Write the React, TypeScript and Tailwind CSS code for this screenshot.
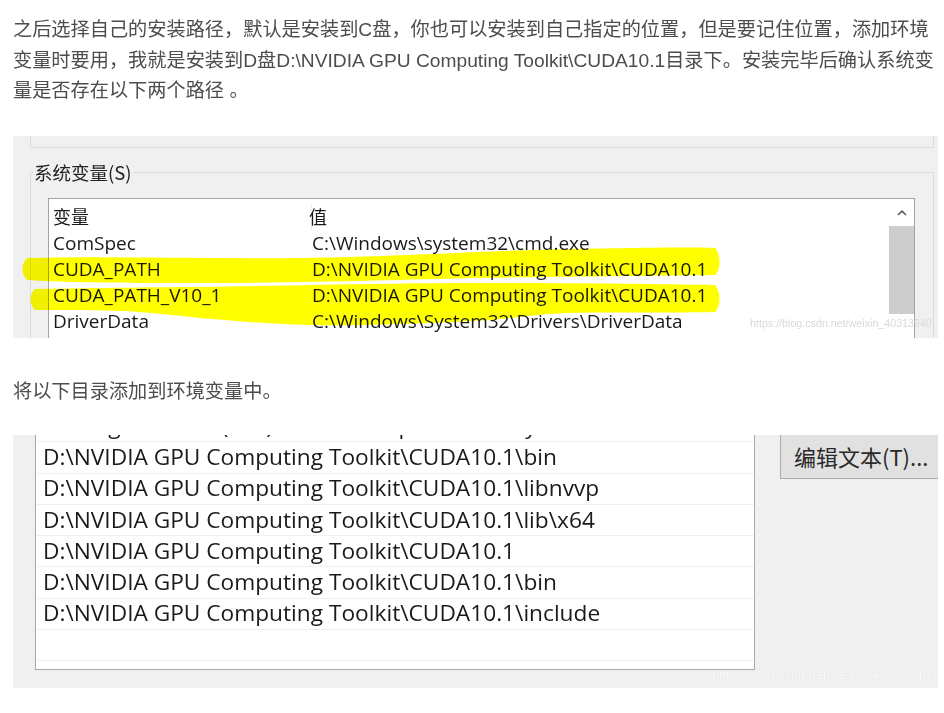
const envRows = [
  { name: "ComSpec", value: "C:\\Windows\\system32\\cmd.exe" },
  { name: "CUDA_PATH", value: "D:\\NVIDIA GPU Computing Toolkit\\CUDA10.1" },
  { name: "CUDA_PATH_V10_1", value: "D:\\NVIDIA GPU Computing Toolkit\\CUDA10.1" },
  { name: "DriverData", value: "C:\\Windows\\System32\\Drivers\\DriverData" },
];

const pathRows = [
  "C:\\Program Files (x86)\\NVIDIA Corporation\\PhysX\\Common",
  "D:\\NVIDIA GPU Computing Toolkit\\CUDA10.1\\bin",
  "D:\\NVIDIA GPU Computing Toolkit\\CUDA10.1\\libnvvp",
  "D:\\NVIDIA GPU Computing Toolkit\\CUDA10.1\\lib\\x64",
  "D:\\NVIDIA GPU Computing Toolkit\\CUDA10.1",
  "D:\\NVIDIA GPU Computing Toolkit\\CUDA10.1\\bin",
  "D:\\NVIDIA GPU Computing Toolkit\\CUDA10.1\\include",
  "",
];

function SystemVarsShot() {
  return (
    <div className="relative mt-[29.5px] h-[202px] w-[925px] overflow-hidden bg-[#f0f0f0]">
      {/* bottom edge of the user variables group */}
      <div className="ml-[17px] mr-[4px] h-[12px] border-x border-b border-[#dcdcdc]" />

      <fieldset className="ml-[17px] mr-[4px] mt-[13px] border border-[#dcdcdc]">
        <legend className="ml-[2px] px-[1px] font-['Noto_Sans_CJK_SC',sans-serif] text-[18.5px] leading-[22px] text-[#222]">
          系统变量(S)
        </legend>
        <div className="pl-[17px] pr-[18px] pt-[15px]">
          <div className="flex h-[200px] border border-[#a3a3a3] bg-white">
            <div className="flex-1 pl-[4px] pt-[5px] font-['Open_Sans','Noto_Sans_CJK_SC',sans-serif] text-[19px] text-[#1a1a1a]">
              <div className="grid h-[26px] grid-cols-[259px_1fr] font-['Noto_Sans_CJK_SC',sans-serif] text-[18px] leading-[24px]">
                <span className="border-r border-[#ececec]">变量</span>
                <span className="-ml-[3px]">值</span>
              </div>
              {envRows.map((r) => (
                <div key={r.name} className="grid h-[26px] grid-cols-[259px_1fr] items-center leading-[26px]">
                  <span>{r.name}</span>
                  <span>{r.value}</span>
                </div>
              ))}
            </div>
            <div className="flex w-[25px] flex-col">
              <div className="flex h-[27px] items-center justify-center">
                <svg width="10" height="6" viewBox="0 0 10 6">
                  <path d="M1 5 L5 1.2 L9 5" fill="none" stroke="#5a5a5a" strokeWidth="1.6" />
                </svg>
              </div>
              <div className="h-[88px] bg-[#cdcdcd]" />
            </div>
          </div>
        </div>
      </fieldset>

      {/* marker strokes */}
      <svg
        className="pointer-events-none absolute left-0 top-0 mix-blend-multiply"
        width="925"
        height="202"
        viewBox="0 0 925 202"
      >
        <path
          fill="#ffff00"
          d="M14 122 C100 120 200 123 287 122 C380 121 460 115 560 113 C620 112 680 111 702 112 C708 118 708 134 702 139 C620 140 520 141 459 142 C380 144 300 147 167 147 C100 147 40 146 14 144 C8 138 8 128 14 122 Z"
        />
        <path
          fill="#ffff00"
          d="M22 153 C90 152 150 151 187 151 C300 149 400 147 459 147 C560 147 640 148 702 149 C708 156 708 170 702 176 C640 177 590 176 557 177 C520 178 490 184 459 185 C400 188 340 190 297 189 C250 188 215 184 187 182 C150 178 120 175 107 175 C80 174 40 174 22 174 C16 168 16 158 22 153 Z"
        />
      </svg>

      <span className="absolute left-[737px] top-[180px] font-['Liberation_Sans',sans-serif] text-[10.7px] leading-[14px] text-[#d9d9d9]">
        https://blog.csdn.net/weixin_40313940
      </span>
    </div>
  );
}

function PathListShot() {
  return (
    <div className="relative mt-[27.75px] flex h-[253px] w-[925px] items-start overflow-hidden bg-[#f0f0f0]">
      <div className="ml-[22px] h-[235px] w-[720px] shrink-0 overflow-hidden border-x border-b border-[#a8a8a8] bg-white">
        <div className="-mt-[24px] font-['Open_Sans',sans-serif] text-[22.7px] text-[#1a1a1a]">
          {pathRows.map((p, i) => (
            <div
              key={i}
              className="flex h-[31.25px] items-center whitespace-nowrap border-b border-[#f0f0f0] pl-[7px]"
            >
              {p}
            </div>
          ))}
        </div>
      </div>
      <div className="ml-[25px] flex h-[44px] w-[200px] shrink-0 items-center border-b border-l border-[#adadad] bg-[#e1e1e1] pl-[13px] font-['Noto_Sans_CJK_SC',sans-serif] text-[22px] text-[#2a2a2a]">
        编辑文本(T)...
      </div>
      <span className="absolute left-[699px] top-[232px] font-['Liberation_Sans',sans-serif] text-[12.8px] leading-[16px] text-[#fafafa] [text-shadow:0_0_1px_#d4d4d4]">
        https://blog.csdn.net/weixin_40313940
      </span>
    </div>
  );
}

export default function App() {
  return (
    <div className="min-h-screen bg-white pl-[13px] pr-[2px] pt-[15px] pb-[25px] font-['Liberation_Sans','Noto_Sans_CJK_SC',sans-serif] text-[19.2px] leading-[30.5px] text-[#4d4d4d]">
      <p>
        之后选择自己的安装路径，默认是安装到C盘，你也可以安装到自己指定的位置，但是要记住位置，添加环境变量时要用，我就是安装到D盘D:\NVIDIA
        GPU Computing Toolkit\CUDA10.1目录下。安装完毕后确认系统变量是否存在以下两个路径 。
      </p>
      <SystemVarsShot />
      <p className="mt-[38.75px]">将以下目录添加到环境变量中。</p>
      <PathListShot />
    </div>
  );
}
